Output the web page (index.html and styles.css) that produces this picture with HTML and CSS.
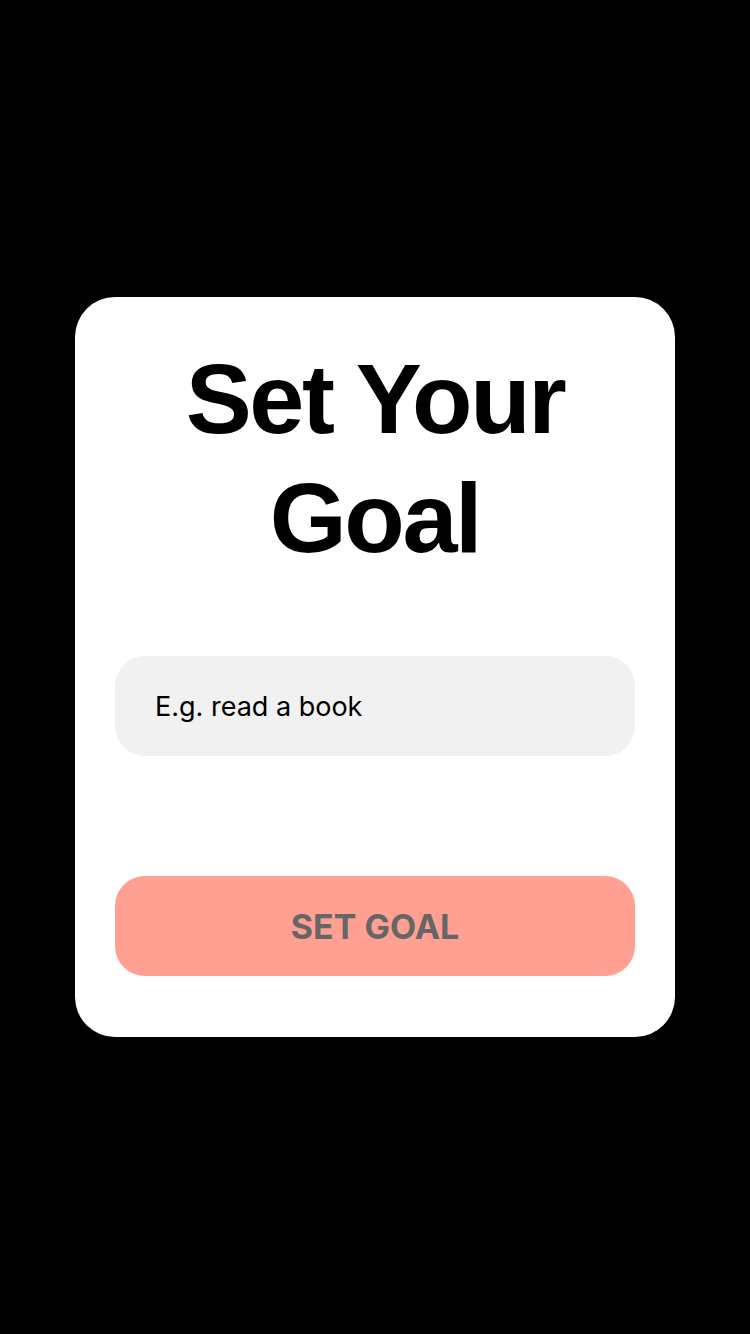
FILE: index.html
```html
<!DOCTYPE html>
<html lang="en">
<head>
<meta charset="utf-8">
<title>Set Your Goal</title>
<link rel="stylesheet" href="styles.css">
</head>
<body>
  <main class="screen">
    <section class="card">
      <h1 class="title">Set Your Goal</h1>
      <input class="goal-input" type="text" placeholder="E.g. read a book">
      <button class="goal-button" type="button">SET GOAL</button>
    </section>
  </main>
</body>
</html>
```

FILE: styles.css
```css
* { box-sizing: border-box; }
html, body {
  margin: 0;
  padding: 0;
  background: #000;
}
.screen {
  width: 750px;
  height: 1334px;
  display: flex;
  align-items: center;
  justify-content: center;
}
.card {
  width: 600px;
  height: 740px;
  background: #fff;
  border-radius: 40px;
  padding: 42px 40px 61px;
  display: flex;
  flex-direction: column;
}
.title {
  margin: 0;
  font-family: "Liberation Sans", Arial, sans-serif;
  font-weight: 700;
  font-size: 99px;
  line-height: 119px;
  letter-spacing: -2.4px;
  text-align: center;
  color: #000;
  padding: 0 20px;
}
.goal-input {
  margin-top: 79px;
  width: 520px;
  height: 100px;
  border: none;
  outline: none;
  border-radius: 30px;
  background: #f1f1f1;
  padding: 0 40px;
  font-family: Inter, "Noto Sans", sans-serif;
  font-size: 27px;
  color: #000;
}
.goal-input::placeholder {
  color: #000;
  opacity: 1;
}
.goal-button {
  margin-top: 120px;
  width: 520px;
  height: 100px;
  border: none;
  border-radius: 30px;
  background: #ffa092;
  color: #666;
  font-family: Inter, "Noto Sans", sans-serif;
  font-weight: 700;
  font-size: 34px;
  letter-spacing: 0;
  padding: 0;
}
```
